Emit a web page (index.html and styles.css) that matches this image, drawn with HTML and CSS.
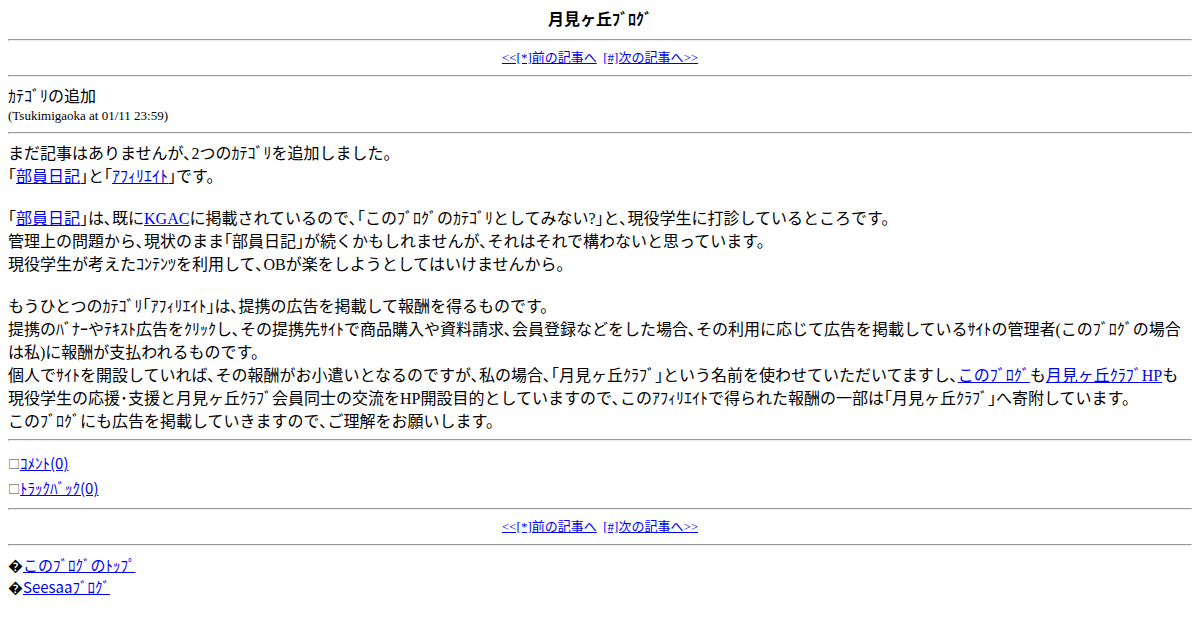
FILE: index.html
```html
<!DOCTYPE html>
<html lang="ja">
<head>
    <meta charset="UTF-8">
    <link rel="stylesheet" href="styles.css">
    <title>月見ヶ丘ﾌﾞﾛｸﾞ</title>
</head>
<body>

    <div class="blogTitle">月見ヶ丘ﾌﾞﾛｸﾞ</div>
    <hr>
    <div class="pager">
        <a href="#">&lt;&lt;[*]前の記事へ</a>&nbsp;
        <a href="#">[#]次の記事へ&gt;&gt;</a>
    </div>
    <hr>

    <div class="entryTitle">ｶﾃｺﾞﾘの追加</div>
    <div class="entryDate">(Tsukimigaoka at 01/11 23:59)</div>
    <hr>

    <div class="entryBody">
        <p>まだ記事はありませんが､2つのｶﾃｺﾞﾘを追加しました。<br>
        ｢<a href="#">部員日記</a>｣と｢<a href="#">ｱﾌｨﾘｴｲﾄ</a>｣です。</p>

        <p>｢<a href="#">部員日記</a>｣は､既に<a href="#">KGAC</a>に掲載されているので､｢このﾌﾞﾛｸﾞのｶﾃｺﾞﾘとしてみない?｣と､現役学生に打診しているところです。<br>
        管理上の問題から､現状のまま｢部員日記｣が続くかもしれませんが､それはそれで構わないと思っています。<br>
        現役学生が考えたｺﾝﾃﾝﾂを利用して､OBが楽をしようとしてはいけませんから。</p>

        <p>もうひとつのｶﾃｺﾞﾘ｢ｱﾌｨﾘｴｲﾄ｣は､提携の広告を掲載して報酬を得るものです。<br>
        提携のﾊﾞﾅｰやﾃｷｽﾄ広告をｸﾘｯｸし､その提携先ｻｲﾄで商品購入や資料請求､会員登録などをした場合､その利用に応じて広告を掲載しているｻｲﾄの管理者(このﾌﾞﾛｸﾞの場合は私)に報酬が支払われるものです。<br>
        個人でｻｲﾄを開設していれば､その報酬がお小遣いとなるのですが､私の場合､｢月見ヶ丘ｸﾗﾌﾞ｣という名前を使わせていただいてますし､<a href="#">このﾌﾞﾛｸﾞ</a>も<a href="#">月見ヶ丘ｸﾗﾌﾞHP</a>も現役学生の応援･支援と月見ヶ丘ｸﾗﾌﾞ会員同士の交流をHP開設目的としていますので､このｱﾌｨﾘｴｲﾄで得られた報酬の一部は｢月見ヶ丘ｸﾗﾌﾞ｣へ寄附しています。<br>
        このﾌﾞﾛｸﾞにも広告を掲載していきますので､ご理解をお願いします。</p>
    </div>
    <hr class="bodyEnd">

    <div class="feedback">
        <div><span class="mark">□</span><a href="#">ｺﾒﾝﾄ(0)</a></div>
        <div><span class="mark">□</span><a href="#">ﾄﾗｯｸﾊﾞｯｸ(0)</a></div>
    </div>
    <hr>
    <div class="pager">
        <a href="#">&lt;&lt;[*]前の記事へ</a>&nbsp;
        <a href="#">[#]次の記事へ&gt;&gt;</a>
    </div>
    <hr>

    <div class="footLinks">
        <div>&#xFFFD;<a href="#">このﾌﾞﾛｸﾞのﾄｯﾌﾟ</a></div>
        <div>&#xFFFD;<a href="#">Seesaaﾌﾞﾛｸﾞ</a></div>
    </div>

</body>
</html>
```

FILE: styles.css
```css
body {
    margin: 8px;
    font-size: 16px;
    font-family: "Liberation Serif", "Noto Sans CJK JP", serif;
    color: #000;
}

a {
    color: #0000ee;
}

hr {
    margin: 8px 0;
}

hr.bodyEnd {
    margin-top: 6px;
}

.blogTitle {
    text-align: center;
    font-weight: bold;
    line-height: 23px;
}

.pager {
    text-align: center;
    font-size: 13px;
    line-height: 18px;
}

.entryTitle {
    line-height: 23px;
}

.entryDate {
    font-size: 13px;
    line-height: 16px;
}

.entryBody p {
    margin: 0 0 19px 0;
    line-height: 23px;
}

.entryBody p:last-child {
    margin-bottom: 0;
}

.feedback {
    font-family: "Noto Sans CJK JP", sans-serif;
    font-size: 15px;
    line-height: 25px;
    padding-top: 1px;
}

.mark {
    font-size: 12px;
    line-height: 1;
    color: #444;
}

.footLinks {
    font-family: "Noto Sans CJK JP", sans-serif;
    font-size: 15px;
    line-height: 22px;
}
```
